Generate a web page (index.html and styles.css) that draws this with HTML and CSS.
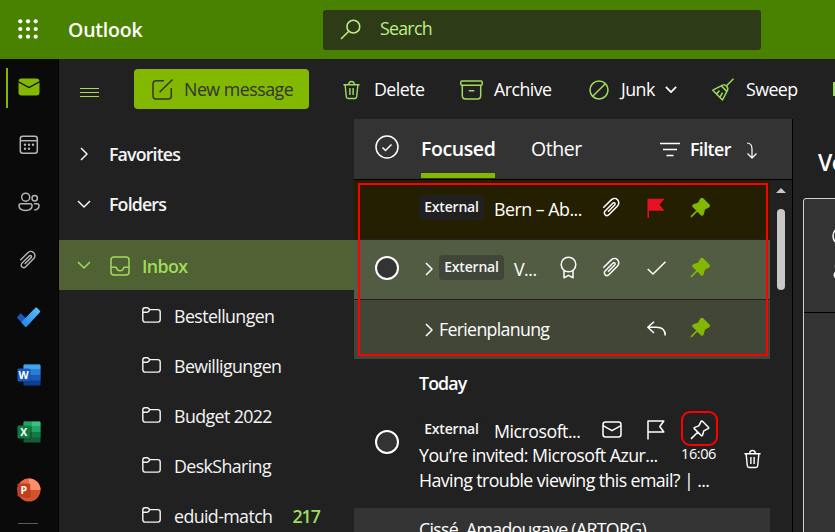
FILE: index.html
```html
<!DOCTYPE html>
<html lang="en">
<head>
<meta charset="utf-8">
<title>Outlook</title>
<link rel="stylesheet" href="styles.css">
</head>
<body>
<svg class="defs" aria-hidden="true">
  <symbol id="clip" viewBox="0 0 20 20"><path d="M1.3 10.3 9 2.6c1.800-1.800 4.700-2.100 6.500-.3s1.700 4.600-.2 6.500l-8.200 8.200c-1.200 1.200-2.900 1.300-4 .2s-1-2.800.2-4l7.500-7.500c.6-.6 1.500-.7 2-.1s.5 1.300-.1 1.900L6 14.200"/></symbol>
  <symbol id="pin" viewBox="0 0 20 20"><path d="m12.500 1.300 5.900 5.900c.5.500.3 1.200-.3 1.500l-4.300 2.200-1.300 4.300c-.2.600-.9.800-1.300.3L4.300 8.600c-.4-.4-.3-1 .3-1.200l4.200-1.500L11 1.600c.3-.6 1-.8 1.500-.3zM7.700 12.200 1 18.900"/></symbol>
  <symbol id="pin-solid" viewBox="0 0 20 20"><path d="m12.700.8 6.200 6.200c.6.600.4 1.400-.3 1.800l-4.200 2.200-1.500 5.300c-.2.700-1 .9-1.500.4L3.200 8.500c-.5-.5-.3-1.300.4-1.500l5-1.800L10.900 1.100c.4-.7 1.200-.9 1.800-.3zM7.500 12.400 1 18.900"/></symbol>
  <symbol id="trash" viewBox="0 0 20 20"><path d="M1.500 4.500h17M7 4.300C7 2.300 8.200 1 10 1s3 1.300 3 3.300M3.300 4.700l1.200 12.200c.1 1.200.9 2 2 2h7c1.100 0 1.900-.8 2-2l1.200-12.200M8.300 8v7.300M11.700 8v7.300"/></symbol>
  <symbol id="folder" viewBox="0 0 20 18"><path d="M.8 4.500V3.200C.8 1.800 1.700.8 3.100.8H6l2.200 2h8.500c1.400 0 2.500 1 2.500 2.400v8.300c0 1.400-1.100 2.500-2.500 2.500H3.300C1.900 16 .8 14.900.8 13.500V4.500zm0 1h4.800c1 0 1.600-.5 2.600-2.700"/></symbol>
  <symbol id="down" viewBox="0 0 14 8"><path d="m1 1 6 6 6-6"/></symbol>
  <symbol id="right" viewBox="0 0 8 14"><path d="m1 1 6 6-6 6"/></symbol>
</svg>

<header class="topbar">
  <svg class="waffle" viewBox="0 0 20 20"><g><circle cx="2.300" cy="2.300" r="2.100"/><circle cx="10" cy="2.300" r="2.100"/><circle cx="17.700" cy="2.300" r="2.100"/><circle cx="2.300" cy="10" r="2.100"/><circle cx="10" cy="10" r="2.100"/><circle cx="17.700" cy="10" r="2.100"/><circle cx="2.300" cy="17.700" r="2.100"/><circle cx="10" cy="17.700" r="2.100"/><circle cx="17.700" cy="17.700" r="2.100"/></g></svg>
  <span class="brand">Outlook</span>
  <div class="search">
    <svg class="ic lens" viewBox="0 0 22 22"><circle cx="14" cy="8" r="6.700"/><path d="M9.200 12.800 1 21"/></svg>
    <span>Search</span>
  </div>
</header>

<div class="app">
  <nav class="rail">
    <div class="app-item current"><svg width="22" height="18" viewBox="0 0 22 18"><rect x=".5" y=".5" width="21" height="17" rx="3" fill="#82b800"/><path d="m0 3.500 11 6 11-6" fill="none" stroke="#0a0a0a" stroke-width="1.300"/></svg></div>
    <div class="app-item"><svg class="ic" width="20" height="20" viewBox="0 0 20 20"><rect x="1.300" y="1.300" width="17" height="17" rx="2.500"/><path d="M1.300 5.700h17"/><g class="dots"><circle cx="6" cy="9.700" r="1.200"/><circle cx="10" cy="9.700" r="1.200"/><circle cx="14" cy="9.700" r="1.200"/><circle cx="6" cy="13.700" r="1.200"/><circle cx="10" cy="13.700" r="1.200"/></g></svg></div>
    <div class="app-item"><svg class="ic" width="22" height="20" viewBox="0 0 22 20"><circle cx="7.700" cy="5.200" r="4"/><circle cx="16.700" cy="6.200" r="2.700"/><path d="M3 11.700h9.200c1.100 0 1.900.8 1.900 1.900 0 3-2.400 4.900-6.500 4.900S1 16.600 1 13.600c0-1.100.9-1.900 2-1.900zM16 11.700h3.200c1.100 0 1.800.7 1.800 1.800 0 2.800-2 4.400-4.800 4.400"/></svg></div>
    <div class="app-item"><svg class="ic" width="19" height="20"><use href="#clip"/></svg></div>
    <div class="app-item"><svg width="25" height="21" viewBox="0 0 25 21"><defs><linearGradient id="tick" x1="0" y1="1" x2="1" y2="0"><stop stop-color="#2482e8"/><stop offset="1" stop-color="#58c5fb"/></linearGradient></defs><path d="m.8 10.500 4-4.300 9.200 9-4.300 4.600z" fill="#195abd"/><path d="m5.200 15.300 14.200-14.500c.5-.5 1-.5 1.500 0l3 3c.5.500.5 1 0 1.500L10.600 19.700c-.5.500-1 .5-1.500 0z" fill="url(#tick)"/></svg></div>
    <div class="app-item"><svg width="24" height="22" viewBox="0 0 24 22"><rect x="6.500" y=".5" width="17" height="21" rx="1.200" fill="#103f91"/><path d="M6.500 11h17v5.500h-17z" fill="#185abd"/><path d="M6.500 5.500h17V11h-17z" fill="#2b7cd3"/><path d="M7.700.5h14.600c.7 0 1.200.5 1.200 1.200v3.800h-17V1.700c0-.7.500-1.200 1.200-1.200z" fill="#41a5ee"/><path d="M6.500 5h7v13.500h-7z" fill="#000" opacity=".25"/><rect x=".5" y="4.500" width="12.500" height="13" rx="1.200" fill="#185abd"/><text x="6.700" y="14.700" class="glyph">W</text></svg></div>
    <div class="app-item"><svg width="24" height="22" viewBox="0 0 24 22"><rect x="6.500" y=".5" width="17" height="21" rx="1.200" fill="#185c37"/><path d="M15 11h8.500v5.500H15z" fill="#107c41"/><path d="M6.500 5.500H15V11H6.500z" fill="#107c41"/><path d="M7.700.5H15v5H6.500V1.700c0-.7.500-1.200 1.200-1.200zM15 5.500h8.500V11H15z" fill="#21a366"/><path d="M15 .5h7.300c.7 0 1.200.5 1.200 1.200v3.800H15z" fill="#33c481"/><path d="M6.500 5h7v13.500h-7z" fill="#000" opacity=".25"/><rect x=".5" y="4.500" width="12.500" height="13" rx="1.200" fill="#107c41"/><text x="6.700" y="14.700" class="glyph">X</text></svg></div>
    <div class="app-item"><svg width="24" height="24" viewBox="0 0 24 24"><circle cx="12" cy="12" r="11.500" fill="#d35230"/><path d="M12 .5A11.500 11.500 0 0 0 .5 12H12z" fill="#ed6c47"/><path d="M12 .5A11.500 11.500 0 0 1 23.500 12H12z" fill="#ff8f6b"/><path d="M6.500 6h7v13.500h-7z" fill="#000" opacity=".2"/><rect x=".5" y="5.500" width="12.500" height="13" rx="1.200" fill="#c43e1c"/><text x="6.700" y="15.700" class="glyph">P</text></svg></div>
    <div class="rail-rule"></div>
  </nav>

  <main class="main">
    <div class="toolbar">
      <svg class="ic lime burger" width="19" height="10" viewBox="0 0 19 10"><path d="M0 .5h19M0 4.500h19M0 8.500h19"/></svg>
      <button class="compose"><svg class="ic" width="21" height="21" viewBox="0 0 21 21"><path d="M12 1.800H4C2.200 1.800 1 3 1 4.700V17c0 1.800 1.200 3 3 3h12.300c1.700 0 3-1.200 3-3V9M7.500 13.300 20.500.5"/></svg><span>New message</span></button>
      <div class="action delete"><svg class="ic lime" width="19" height="20"><use href="#trash"/></svg><span>Delete</span></div>
      <div class="action archive"><svg class="ic lime" width="23" height="20" viewBox="0 0 23 20"><rect x=".8" y="1" width="21.400" height="4.300" rx="1.200"/><path d="M2.300 5.300v10.200c0 2 1.200 3.500 3.300 3.500h11.800c2.100 0 3.300-1.500 3.300-3.500V5.300M8.700 10.700h5.600"/></svg><span>Archive</span></div>
      <div class="action junk"><svg class="ic lime" width="20" height="20" viewBox="0 0 20 20"><circle cx="10" cy="10" r="9"/><path d="M3.700 16.300 16.300 3.700"/></svg><span>Junk</span><svg class="ic bold" width="12" height="7"><use href="#down"/></svg></div>
      <div class="action sweep"><svg class="ic lime" width="22" height="23" viewBox="0 0 22 23"><path d="M21.500.8 14 8.300M9.200 7.800c2-1.500 4.300-1 5.300.3 1.500 1.500 1.700 3.500.3 5.500L10.500 22 .8 12.200zM9.200 7.800l5.800 5.800M4.500 16l3-3.500M8 19.200l2.500-4.500"/></svg><span>Sweep</span></div>
      <i class="cut"></i>
    </div>

    <div class="content">
      <aside class="folders">
        <div class="group"><svg class="ic" width="8" height="14"><use href="#right"/></svg><b class="fav">Favorites</b></div>
        <div class="group"><svg class="ic" width="14" height="8"><use href="#down"/></svg><b>Folders</b></div>
        <div class="inbox"><svg class="ic lime" width="14" height="8"><use href="#down"/></svg><svg class="ic lime box" width="20" height="20" viewBox="0 0 20 20"><rect x="1" y="1" width="18" height="18" rx="3"/><path d="M1 11.300h4.500c.6 0 .8.200 1 .8.500 1.600 1.700 2.700 3.500 2.700s3-1.100 3.500-2.700c.2-.6.400-.8 1-.8H19"/></svg><b>Inbox</b></div>
        <div class="folder"><svg class="ic"><use href="#folder"/></svg><span>Bestellungen</span></div>
        <div class="folder"><svg class="ic"><use href="#folder"/></svg><span>Bewilligungen</span></div>
        <div class="folder"><svg class="ic"><use href="#folder"/></svg><span>Budget 2022</span></div>
        <div class="folder"><svg class="ic"><use href="#folder"/></svg><span>DeskSharing</span></div>
        <div class="folder"><svg class="ic"><use href="#folder"/></svg><span>eduid-match</span><b class="count">217</b></div>
      </aside>

      <section class="list">
        <div class="tabs">
          <div class="lead"><svg class="ic" width="24" height="24" viewBox="0 0 24 24"><circle cx="12" cy="12" r="11"/><path d="m7.500 12.500 3 3 6-6"/></svg></div>
          <b class="tab focused">Focused</b>
          <span class="tab other">Other</span>
          <div class="filter"><svg class="ic" width="20" height="15" viewBox="0 0 20 15"><path d="M0 1.500h20M3 7.500h14M6.500 13.500h7"/></svg><b>Filter</b><svg class="ic sort" width="11" height="17" viewBox="0 0 11 17"><path d="M1 1c3.500 0 5 2.500 5 6v9M1.500 11.500 6 16l4.500-4.500"/></svg></div>
        </div>
        <div class="scroller">
          <div class="mails">
            <div class="pinned">
              <div class="mail m1"><div class="lead"></div><span class="tag">External</span><span class="subj s1">Bern – Ab...</span>
                <div class="icons"><i><svg class="ic" width="20" height="21"><use href="#clip"/></svg></i><i><svg width="18" height="20" viewBox="0 0 18 20"><path d="M.5.7h17l-5 6 5 6H2v7H.5z" fill="#e81123"/></svg></i><i><svg class="ic solid" width="20" height="20"><use href="#pin-solid"/></svg></i></div></div>
              <div class="mail m2"><div class="lead"><span class="ring"></span></div><svg class="ic more" width="8" height="14"><use href="#right"/></svg><span class="tag">External</span><span class="subj s2">V...</span>
                <div class="icons"><i><svg class="ic" width="17" height="23" viewBox="0 0 17 23"><circle cx="8.500" cy="8.500" r="7.300"/><path d="M4 14.300v7.500l4.500-2.500 4.500 2.500v-7.500"/></svg></i><i><svg class="ic" width="20" height="21"><use href="#clip"/></svg></i><i><svg class="ic" width="19" height="14" viewBox="0 0 19 14"><path d="M.7 8 6 13 18.500.8"/></svg></i><i><svg class="ic solid" width="20" height="20"><use href="#pin-solid"/></svg></i></div></div>
              <div class="mail m3"><div class="lead"></div><svg class="ic more" width="8" height="14"><use href="#right"/></svg><span class="subj s3">Ferienplanung</span>
                <div class="icons"><i><svg class="ic" width="19" height="15" viewBox="0 0 19 15"><path d="M7 .8.800 6.300 7 12M.8 6.300h8.700c5.500 0 8.700 2.500 8.700 8.200"/></svg></i><i><svg class="ic solid" width="20" height="20"><use href="#pin-solid"/></svg></i></div></div>
              <div class="outline"></div>
            </div>
            <b class="day">Today</b>
            <div class="message">
              <div class="lead"><span class="ring"></span></div>
              <div class="body">
                <div class="line head"><span class="tag">External</span><span class="subj s4">Microsoft...</span>
                  <div class="icons"><i><svg class="ic" width="20" height="17" viewBox="0 0 20 17"><rect x="1" y="1" width="18" height="15" rx="2.500"/><path d="m1 4.700 9 5 9-5"/></svg></i><i><svg class="ic" width="18" height="20" viewBox="0 0 18 20"><path d="M1 19.500V1h15.800l-4 5.500 4 5.500H1"/></svg></i><i><svg class="ic" width="20" height="20"><use href="#pin"/></svg></i></div></div>
                <div class="line"><span class="l2">You’re invited: Microsoft Azur...</span><time>16:06</time></div>
                <div class="line"><span class="l3">Having trouble viewing this email? | ...</span></div>
                <div class="pin-mark"></div>
              </div>
              <svg class="ic bin" width="19" height="20"><use href="#trash"/></svg>
            </div>
            <div class="next">Cissé, Amadougaye (ARTORG)</div>
          </div>
          <div class="scrollbar"><svg width="10" height="5" viewBox="0 0 10 5"><path d="M0 5 5 0l5 5z" fill="#c8c8c8"/></svg><div class="thumb"></div></div>
        </div>
      </section>

      <section class="reading">
        <b>Vo</b>
        <div class="card"><div class="card-top"><svg class="ic" width="20" height="60" viewBox="0 0 20 60"><circle cx="10" cy="10" r="9"/><circle cx="6" cy="40" r="2.500"/><circle cx="6" cy="49" r="3.700"/></svg></div></div>
      </section>
    </div>
  </main>
</div>
</body>
</html>
```

FILE: styles.css
```css
* { box-sizing: border-box; }
body { margin: 0; width: 835px; height: 532px; overflow: hidden; background: #212121; color: #fff; font: 17.8px/1.4 "Open Sans", "Noto Sans", sans-serif; letter-spacing: -.6px; white-space: nowrap; }
b { font-weight: 600; }
svg { flex: none; display: block; }
.defs { position: absolute; width: 0; height: 0; }
.ic { fill: none; stroke: currentColor; stroke-width: 1.5; stroke-linejoin: round; overflow: visible; }
.lime { color: #a0dc5c; }
.bold { stroke-width: 2; }
.solid { color: #82b800; fill: #82b800; }
.dots { fill: currentColor; stroke: none; }
.glyph { fill: #fff; font: 700 10.5px "Open Sans", sans-serif; letter-spacing: 0; text-anchor: middle; }

.topbar { height: 59px; background: #498200; display: flex; align-items: center; padding-left: 18px; }
.waffle { width: 20px; height: 20px; fill: #fff; margin-top: -2px; }
.brand { width: 255px; margin-left: 30px; padding-top: 1px; font-size: 19.5px; font-weight: 600; letter-spacing: -.2px; }
.search { width: 438px; height: 40px; background: #2e3b17; border-radius: 3px; display: flex; align-items: center; padding-left: 17px; gap: 18px; color: #bdee88; letter-spacing: -.75px; }
.search span { padding-bottom: 2px; }
.lens { width: 21px; height: 21px; stroke-width: 1.6; margin-right: 1px; }

.app { display: flex; height: 473px; }
.rail { width: 59px; flex: none; background: #0a0a0a; border-right: 1px solid #000; color: #b5b5b5; }
.app-item { height: 57.5px; display: flex; align-items: center; justify-content: center; padding-right: 1px; }
.current { border-left: 2px solid #82b800; height: 40px; margin: 9px 0 8px 6px; padding: 0 9px 2px 0; }
.rail-rule { width: 20px; height: 1px; background: #5c5c5c; margin: 4px 0 0 18px; }

.main { flex: 1; min-width: 0; overflow: hidden; }
.toolbar { height: 60px; display: flex; align-items: center; padding-left: 21px; letter-spacing: -.55px; }
.burger { margin-top: 7px; stroke-width: 1; }
.compose { width: 175px; height: 40px; margin-left: 35px; border: 0; border-radius: 4px; background: #82b800; color: #333; font: inherit; letter-spacing: -.5px; display: flex; align-items: center; gap: 11px; padding: 1px 0 0 18px; flex: none; }
.action { display: flex; align-items: center; flex: none; padding-top: 1px; }
.delete { margin-left: 33px; width: 118px; gap: 13px; }
.archive { width: 129px; gap: 11px; }
.junk { width: 123px; gap: 12px; }
.junk .bold { margin-left: -2px; }
.sweep { width: 121px; gap: 12px; }
.cut { width: 8px; height: 14px; flex: none; background: #a0dc5c; }

.content { display: flex; height: 413px; }
.folders { width: 295px; flex: none; padding-top: 10px; color: #f5f5f5; }
.group { height: 50px; display: flex; align-items: center; padding-left: 18px; letter-spacing: -.85px; }
.group b { margin-left: 18px; padding-top: 1px; }
.group .fav { margin-left: 21px; }
.group svg:first-child[width="8"] { margin-left: 3px; }
.inbox { height: 50px; margin-top: 11px; background: #506133; color: #a0dc5c; display: flex; align-items: center; padding-left: 18px; letter-spacing: -.6px; }
.box { margin: 1px 12px 0 19px; }
.inbox b { padding-top: 3px; }
.folder { height: 50px; display: flex; align-items: center; padding: 1px 0 0 83px; gap: 13px; letter-spacing: -.6px; }
.folder span, .count { padding-top: 2px; }
.folder svg { width: 19px; height: 17px; }
.count { color: #a0dc5c; margin-left: 7px; letter-spacing: -1px; }

.list { width: 439px; flex: none; border-right: 1px solid #000; }
.lead { width: 66px; flex: none; display: flex; justify-content: center; }
.tabs { height: 61px; background: #333; border-bottom: 1px solid #000; display: flex; align-items: center; font-size: 19.5px; }
.tabs .lead { padding-bottom: 4px; }
.tab { height: 58px; margin-left: 1px; padding-top: 15px; }
.focused { width: 74px; border-bottom: 5px solid #82b800; letter-spacing: -.4px; }
.other { width: 129px; margin-left: 36px; letter-spacing: -.45px; }
.filter { display: flex; align-items: center; gap: 10px; font-size: 17.8px; letter-spacing: -.6px; }
.filter b { width: 46px; }
.sort { stroke-width: 1.2; margin-top: 3px; }
.scroller { display: flex; height: 352px; }
.mails { width: 416px; flex: none; }
.pinned { position: relative; }
.outline { position: absolute; left: 4px; top: 3px; width: 410px; height: 173px; border: 2px solid #f00; }
.mail { display: flex; align-items: center; }
.m1 { height: 60px; background: #241f00; border-bottom: 1px solid #212121; padding-bottom: 4px; }
.m2 { height: 60px; background: #525c43; border-bottom: 1px solid #212121; padding-bottom: 4px; }
.m3 { height: 59px; background: #424637; padding-bottom: 3px; }
.ring { width: 24px; height: 24px; border: 2px solid #fff; border-radius: 50%; background: #333; }
.more { margin: 3px 6px 0 5px; }
.m2 .more { margin-right: 7px; }
.tag { width: 65px; height: 25px; flex: none; margin-left: -1px; border-radius: 4px; background: #212121; color: #f5f5f5; font-size: 14px; font-weight: 600; line-height: 24px; text-align: center; letter-spacing: -.2px; }
.m2 .tag { background: #40463a; }
.subj { letter-spacing: -.5px; padding-top: 3px; }
.s1, .s2, .s4 { margin-left: 10px; }
.s3 { letter-spacing: -.7px; }
.icons { margin-left: auto; padding-right: 48px; display: flex; }
.icons i { width: 44px; display: flex; align-items: center; justify-content: center; }
.day { display: block; height: 52px; padding: 12px 0 0 65px; letter-spacing: -.9px; }
.message { display: flex; height: 97px; }
.message .lead { padding-top: 19px; height: 43px; }
.body { position: relative; width: 324px; padding-top: 6px; }
.line { display: flex; align-items: center; height: 25px; }
.head .icons { padding-right: 22px; }
.line time { margin-left: auto; margin-right: 28px; padding-bottom: 1px; font-size: 14.5px; letter-spacing: -.4px; }
.l2 { letter-spacing: -.54px; margin-left: -1px; padding-top: 1px; }
.l3 { letter-spacing: -.6px; padding-top: 2px; margin-left: -1px; }
.pin-mark { position: absolute; left: 261px; top: 0; width: 37px; height: 35px; border: 2px solid #f00; border-radius: 9px; }
.bin { margin: 38px 0 0 -1px; }
.next { height: 40px; padding: 9px 0 0 65px; background: #333; letter-spacing: -.7px; }
.scrollbar { width: 22px; padding: 8px 0 0 6px; }
.thumb { width: 8px; height: 81px; margin: 16px 0 0 1px; border-radius: 4px; background: #c8c8c8; }

.reading { width: 42px; flex: none; overflow: hidden; }
.reading b { display: block; height: 79px; padding: 27px 0 0 25px; font-size: 23px; }
.card { width: 80px; height: 400px; margin-left: 10px; border: 1px solid #d0d0d0; border-radius: 3px; background: #333; }
.card-top { height: 114px; border-bottom: 1px solid #000; padding: 27px 0 0 28px; }
```
